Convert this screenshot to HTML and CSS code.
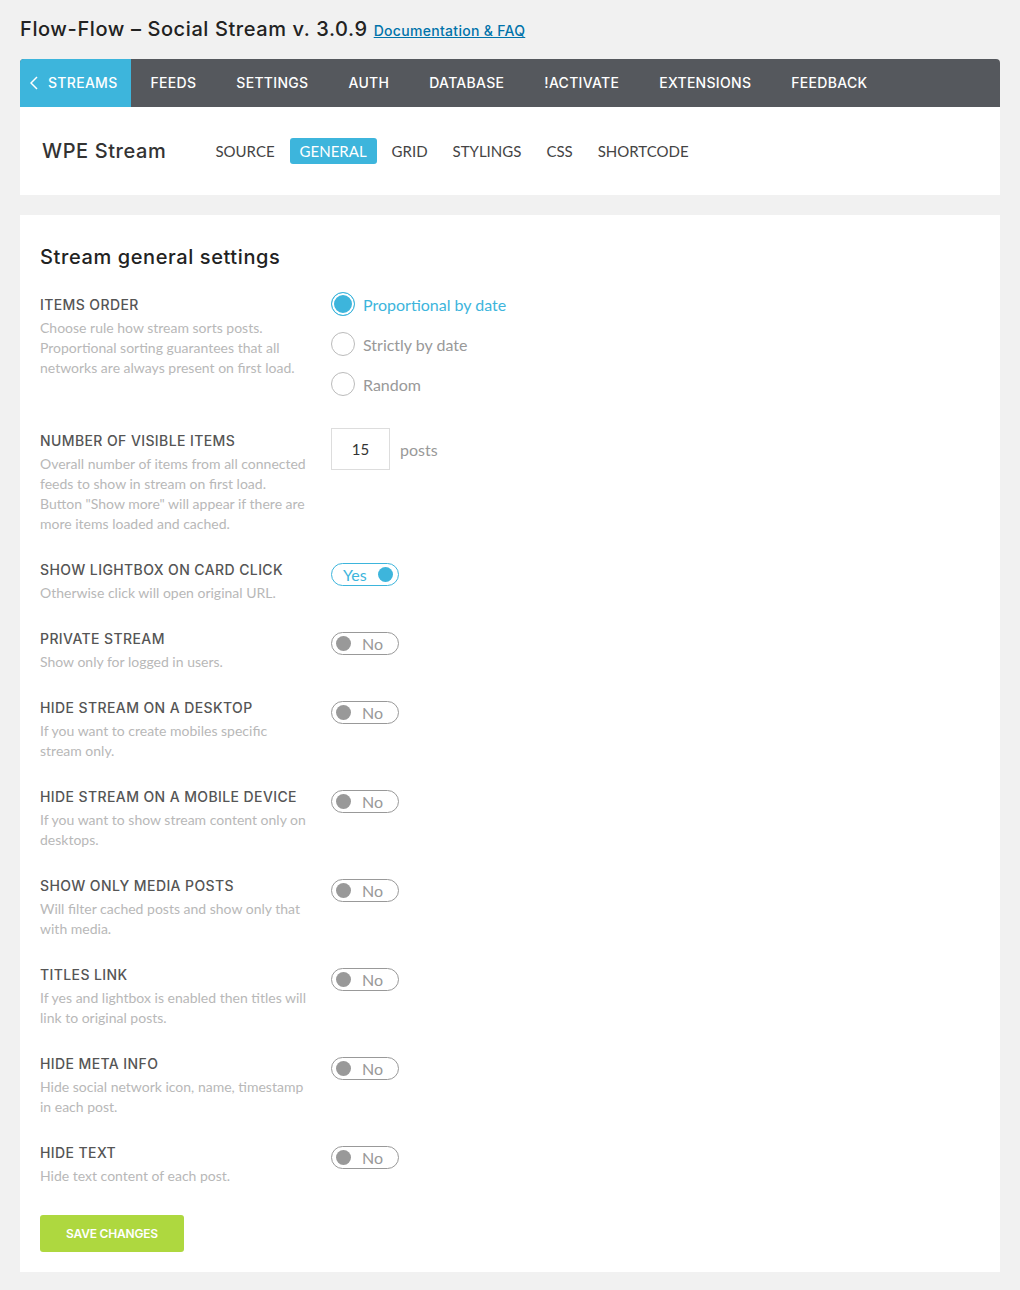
FILE: index.html
```html
<!DOCTYPE html>
<html lang="en">
<head>
    <meta charset="UTF-8">
    <meta name="viewport" content="width=device-width, initial-scale=1.0">
    <title>Flow-Flow - Stream settings</title>
    <link rel="stylesheet" href="styles.css">
</head>
<body>
    <div class="page">
        <h1 class="page-title">Flow-Flow – Social Stream v. 3.0.9 <a href="#" class="doc-link">Documentation &amp; FAQ</a></h1>

        <nav class="main-nav">
            <a href="#" class="nav-item nav-back">
                <svg width="8" height="14" viewBox="0 0 8 14"><polyline points="7,1 1,7 7,13" fill="none" stroke="#fff" stroke-width="1.5"/></svg>
                STREAMS
            </a>
            <a href="#" class="nav-item">FEEDS</a>
            <a href="#" class="nav-item">SETTINGS</a>
            <a href="#" class="nav-item">AUTH</a>
            <a href="#" class="nav-item">DATABASE</a>
            <a href="#" class="nav-item">!ACTIVATE</a>
            <a href="#" class="nav-item">EXTENSIONS</a>
            <a href="#" class="nav-item">FEEDBACK</a>
        </nav>

        <div class="stream-header">
            <h2 class="stream-name">WPE Stream</h2>
            <div class="sub-tabs">
                <a href="#" class="sub-tab">SOURCE</a>
                <a href="#" class="sub-tab active">GENERAL</a>
                <a href="#" class="sub-tab">GRID</a>
                <a href="#" class="sub-tab">STYLINGS</a>
                <a href="#" class="sub-tab">CSS</a>
                <a href="#" class="sub-tab">SHORTCODE</a>
            </div>
        </div>

        <section class="settings-panel">
            <h3 class="panel-title">Stream general settings</h3>

            <div class="setting-row">
                <div class="setting-info">
                    <div class="setting-label">ITEMS ORDER</div>
                    <p class="setting-desc">Choose rule how stream sorts posts. Proportional sorting guarantees that all networks are always present on first load.</p>
                </div>
                <div class="radio-list">
                    <label class="radio checked"><span class="radio-dot"></span>Proportional by date</label>
                    <label class="radio"><span class="radio-dot"></span>Strictly by date</label>
                    <label class="radio"><span class="radio-dot"></span>Random</label>
                </div>
            </div>

            <div class="setting-row">
                <div class="setting-info">
                    <div class="setting-label">NUMBER OF VISIBLE ITEMS</div>
                    <p class="setting-desc">Overall number of items from all connected feeds to show in stream on first load. Button "Show more" will appear if there are more items loaded and cached.</p>
                </div>
                <div class="number-field">
                    <input type="text" class="number-input" value="15">
                    <span class="unit">posts</span>
                </div>
            </div>

            <div class="setting-row">
                <div class="setting-info">
                    <div class="setting-label">SHOW LIGHTBOX ON CARD CLICK</div>
                    <p class="setting-desc">Otherwise click will open original URL.</p>
                </div>
                <span class="toggle on"><span class="toggle-text">Yes</span><span class="knob"></span></span>
            </div>

            <div class="setting-row">
                <div class="setting-info">
                    <div class="setting-label">PRIVATE STREAM</div>
                    <p class="setting-desc">Show only for logged in users.</p>
                </div>
                <span class="toggle"><span class="knob"></span><span class="toggle-text">No</span></span>
            </div>

            <div class="setting-row">
                <div class="setting-info">
                    <div class="setting-label">HIDE STREAM ON A DESKTOP</div>
                    <p class="setting-desc">If you want to create mobiles specific stream only.</p>
                </div>
                <span class="toggle"><span class="knob"></span><span class="toggle-text">No</span></span>
            </div>

            <div class="setting-row">
                <div class="setting-info">
                    <div class="setting-label">HIDE STREAM ON A MOBILE DEVICE</div>
                    <p class="setting-desc">If you want to show stream content only on desktops.</p>
                </div>
                <span class="toggle"><span class="knob"></span><span class="toggle-text">No</span></span>
            </div>

            <div class="setting-row">
                <div class="setting-info">
                    <div class="setting-label">SHOW ONLY MEDIA POSTS</div>
                    <p class="setting-desc">Will filter cached posts and show only that with media.</p>
                </div>
                <span class="toggle"><span class="knob"></span><span class="toggle-text">No</span></span>
            </div>

            <div class="setting-row">
                <div class="setting-info">
                    <div class="setting-label">TITLES LINK</div>
                    <p class="setting-desc">If yes and lightbox is enabled then titles will link to original posts.</p>
                </div>
                <span class="toggle"><span class="knob"></span><span class="toggle-text">No</span></span>
            </div>

            <div class="setting-row">
                <div class="setting-info">
                    <div class="setting-label">HIDE META INFO</div>
                    <p class="setting-desc">Hide social network icon, name, timestamp in each post.</p>
                </div>
                <span class="toggle"><span class="knob"></span><span class="toggle-text">No</span></span>
            </div>

            <div class="setting-row last">
                <div class="setting-info">
                    <div class="setting-label">HIDE TEXT</div>
                    <p class="setting-desc">Hide text content of each post.</p>
                </div>
                <span class="toggle"><span class="knob"></span><span class="toggle-text">No</span></span>
            </div>

            <button class="save-btn">SAVE CHANGES</button>
        </section>
    </div>
</body>
</html>
```

FILE: styles.css
```css
body {
    margin: 0;
    background-color: #f1f1f1;
    font-family: "Lato", sans-serif;
    color: #444;
}

.page {
    padding: 17px 20px 18px;
}

.page-title {
    font-family: "Inter", "DejaVu Sans", sans-serif;
    font-size: 20px;
    font-weight: 500;
    letter-spacing: 0.6px;
    line-height: 24px;
    color: #222;
    margin: 0 0 16px;
}

.doc-link {
    font-size: 14px;
    letter-spacing: 0.3px;
    color: #0073aa;
    text-decoration: underline;
}

/* top navigation */
.main-nav {
    display: flex;
    background-color: #55585d;
    border-radius: 4px 4px 0 0;
    overflow: hidden;
    height: 48px;
}

.nav-item {
    font-family: "Inter", "DejaVu Sans", sans-serif;
    font-size: 14px;
    font-weight: 500;
    letter-spacing: 0.3px;
    line-height: 48px;
    color: #fff;
    text-decoration: none;
    padding: 0 20px;
}

.nav-back {
    display: flex;
    align-items: center;
    gap: 10px;
    background-color: #3db5dc;
    padding: 0 13px 0 10px;
}

/* stream header */
.stream-header {
    display: flex;
    align-items: center;
    background-color: #fff;
    height: 88px;
    padding: 0 22px;
    margin-bottom: 20px;
}

.stream-name {
    font-family: "Inter", "DejaVu Sans", sans-serif;
    font-size: 20px;
    font-weight: 500;
    letter-spacing: 0.6px;
    color: #333;
    margin: 0 39px 0 0;
}

.sub-tabs {
    display: flex;
    gap: 5px;
}

.sub-tab {
    font-size: 15px;
    line-height: 26px;
    color: #444;
    text-decoration: none;
    padding: 0 10px;
    border-radius: 3px;
}

.sub-tab.active {
    background-color: #3db5dc;
    color: #fff;
}

/* settings */
.settings-panel {
    background-color: #fff;
    padding: 30px 20px 20px;
}

.panel-title {
    font-family: "Inter", "DejaVu Sans", sans-serif;
    font-size: 20px;
    font-weight: 500;
    letter-spacing: 0.6px;
    line-height: 24px;
    color: #222;
    margin: 0 0 26px;
}

.setting-row {
    display: flex;
    align-items: flex-start;
    gap: 25px;
    margin-bottom: 26px;
}

.setting-row.last {
    margin-bottom: 29px;
}

.setting-info {
    width: 266px;
    flex-shrink: 0;
}

.setting-label {
    font-family: "Inter", "DejaVu Sans", sans-serif;
    font-size: 14px;
    font-weight: 500;
    letter-spacing: 0.4px;
    line-height: 20px;
    color: #555;
    margin-bottom: 3px;
}

.setting-desc {
    font-size: 14px;
    line-height: 20px;
    color: #b8b8b8;
    margin: 0;
}

.radio-list {
    display: flex;
    flex-direction: column;
    gap: 16px;
    margin-top: -3px;
    padding-bottom: 9px;
}

.radio {
    display: flex;
    align-items: center;
    gap: 8px;
    height: 24px;
    font-size: 16px;
    color: #999;
}

.radio-dot {
    width: 22px;
    height: 22px;
    border: 1px solid #bbb;
    border-radius: 50%;
    background: #fff;
}

.radio.checked {
    color: #3db5dc;
}

.radio.checked .radio-dot {
    border-color: #3db5dc;
    background: #3db5dc;
    box-shadow: inset 0 0 0 2px #fff;
}

.number-field {
    display: flex;
    align-items: center;
    gap: 10px;
    margin-top: -3px;
}

.number-input {
    width: 57px;
    height: 40px;
    border: 1px solid #ddd;
    text-align: center;
    font-family: "Lato", sans-serif;
    font-size: 15px;
    color: #333;
    padding: 0;
}

.unit {
    font-size: 16px;
    color: #999;
}

.toggle {
    display: flex;
    align-items: center;
    justify-content: space-between;
    width: 68px;
    height: 23px;
    box-sizing: border-box;
    border: 1px solid #999;
    border-radius: 12px;
    padding: 0 15px 0 4px;
    margin-top: 3px;
    font-size: 16px;
    color: #999;
}

.toggle .knob {
    width: 15px;
    height: 15px;
    border-radius: 50%;
    background-color: #999;
}

.toggle.on {
    border-color: #3db5dc;
    color: #3db5dc;
    padding: 0 5px 0 11px;
}

.toggle.on .knob {
    background-color: #3db5dc;
}

.save-btn {
    display: block;
    background-color: #aed83f;
    color: #fff;
    border: none;
    border-radius: 3px;
    width: 144px;
    height: 37px;
    font-family: "Inter", "DejaVu Sans", sans-serif;
    font-size: 12px;
    font-weight: 600;
    letter-spacing: -0.2px;
    cursor: pointer;
}
```
